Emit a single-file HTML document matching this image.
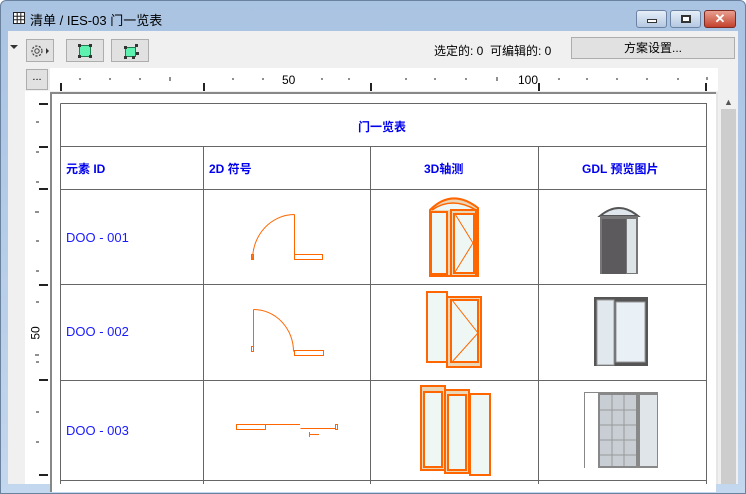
<!DOCTYPE html>
<html><head><meta charset="utf-8"><style>
*{margin:0;padding:0;box-sizing:border-box}
body{width:746px;height:484px;overflow:hidden;position:relative;background:#fff;font-family:"Liberation Sans","Noto Sans CJK SC",sans-serif;font-size:12px;color:#000}
.a{position:absolute}
.btn{position:absolute;border:1px solid #adadad;background:#e1e1e1}
.t{position:absolute;color:#1a1aff;font-size:13px;white-space:nowrap}
.b{font-weight:bold;color:#0000ee;font-size:12px}
</style></head><body>
<div class="a" style="left:0;top:0;width:746px;height:494px;background:linear-gradient(#a9c3e2,#c3d7ee);border-radius:6px 6px 0 0;border:1px solid #6b829f"></div>
<div class="a" style="left:8px;top:31px;width:730px;height:453px;background:#f0f0f0"></div>
<svg class="a" style="left:12px;top:11px" width="14" height="14"><rect x="1.5" y="1.5" width="11" height="11" fill="#fff" stroke="#222"/><path d="M5.2 1.5V12.5M8.8 1.5V12.5M1.5 5.2H12.5M1.5 8.8H12.5" stroke="#222"/></svg>
<div class="a" style="left:30px;top:10px;font-size:13px;color:#000">清单 / IES-03 门一览表</div>
<div class="a" style="left:636px;top:10px;width:31px;height:18px;border:1px solid #6d83a3;border-radius:3px;background:linear-gradient(#e6eef8,#b4c8e2)"><div class="a" style="left:10px;top:8px;width:10px;height:4px;border:1px solid #333;background:#fff"></div></div>
<div class="a" style="left:670px;top:10px;width:31px;height:18px;border:1px solid #6d83a3;border-radius:3px;background:linear-gradient(#e6eef8,#b4c8e2)"><div class="a" style="left:10px;top:4px;width:10px;height:8px;border:2px solid #333;background:#fff"></div></div>
<div class="a" style="left:704px;top:10px;width:32px;height:18px;border:1px solid #7e2a20;border-radius:3px;background:linear-gradient(#e8a091,#c3412c);color:#fff;font-weight:bold;text-align:center;line-height:16px;font-size:13px">✕</div>
<div class="a" style="left:10px;top:45px;width:0;height:0;border-left:4px solid transparent;border-right:4px solid transparent;border-top:4px solid #333"></div>
<div class="btn" style="left:26px;top:39px;width:28px;height:23px"><svg class="a" style="left:2px;top:3px" width="22" height="16"><circle cx="8" cy="8" r="5" fill="none" stroke="#444" stroke-width="1.2" stroke-dasharray="2.2 1.4"/><circle cx="8" cy="8" r="2.2" fill="none" stroke="#444"/><path d="M17 5L20 8L17 11Z" fill="#333"/></svg></div>
<div class="btn" style="left:66px;top:39px;width:38px;height:23px"><div class="a" style="left:12px;top:5px;width:12px;height:12px;background:#5ef2b0;border:1px solid #207a50"></div><div class="a" style="left:11px;top:4px;width:3px;height:3px;background:#333"></div><div class="a" style="left:22px;top:4px;width:3px;height:3px;background:#333"></div><div class="a" style="left:11px;top:15px;width:3px;height:3px;background:#333"></div><div class="a" style="left:22px;top:15px;width:3px;height:3px;background:#333"></div></div>
<div class="btn" style="left:111px;top:39px;width:38px;height:23px"><div class="a" style="left:13px;top:7px;width:11px;height:10px;background:#5ef2b0;border:1px solid #207a50"></div><div class="a" style="left:12px;top:6px;width:3px;height:3px;background:#333"></div><div class="a" style="left:23px;top:4px;width:3px;height:3px;background:#333"></div><div class="a" style="left:12px;top:16px;width:3px;height:3px;background:#333"></div><div class="a" style="left:20px;top:16px;width:3px;height:3px;background:#333"></div><div class="a" style="left:24px;top:12px;width:3px;height:3px;background:#333"></div></div>
<div class="a" style="left:434px;top:42px;font-size:12px">选定的: 0&nbsp; 可编辑的: 0</div>
<div class="btn" style="left:571px;top:37px;width:164px;height:22px;text-align:center;line-height:20px">方案设置...</div>
<div class="a" style="left:50px;top:68px;width:668px;height:23px;background:#fff"></div>
<div class="a" style="left:25px;top:91px;width:25px;height:393px;background:#fff"></div>
<div class="btn" style="left:26px;top:69px;width:22px;height:21px;text-align:center;line-height:14px;font-size:11px">...</div>
<svg class="a" style="left:0;top:0" width="746" height="484">
<g stroke="#222">
<path d="M61 83V91M204 83V91M371 83V91M539 83V91M706 83V91" stroke-width="2"/>
<path d="M80 78V80M110 78V80M140 78V80M170 77V81M233 78V80M263 78V80M322 78V80M349 78V80M406 78V80M435 78V80M466 78V80M497 77V81M559 78V80M587 78V80M617 78V80M647 78V80M678 78V80M707 77V80"/>
<path d="M39 104H48M39 147H48M39 189H48M39 285H48M39 380H48M39 475H48" stroke-width="2"/>
<path d="M36 122H39M36 152H39M36 182H39M35 212H39M36 241H39M36 271H39M36 302H39M35 355H39M36 362H39M36 412H39M36 442H39"/>
</g>
</svg>
<div class="a" style="left:282px;top:73px;font-size:12px">50</div>
<div class="a" style="left:518px;top:73px;font-size:12px">100</div>
<div class="a" style="left:29px;top:326px;font-size:12px;transform:rotate(-90deg)">50</div>
<div class="a" style="left:50px;top:92px;width:666px;height:400px;background:#fff;border-left:2px solid #888;border-top:2px solid #888"></div>
<div class="a" style="left:716px;top:92px;width:2px;height:392px;background:#e6e6e6"></div>
<div class="a" style="left:721px;top:93px;width:15px;height:391px;background:#f0f0f0"></div>
<div class="a" style="left:721px;top:109px;width:15px;height:375px;background:#cdcdcd"></div>
<div class="a" style="left:724px;top:97px;font-size:9px;color:#555">▲</div>
<svg class="a" style="left:0;top:0" width="746" height="484">
<g stroke="#666" fill="none" stroke-width="1">
<path d="M60.5 103.5H706.5V490M60.5 103.5V490M60.5 146.5H706.5M60.5 189.5H706.5M60.5 284.5H706.5M60.5 380.5H706.5M60.5 480.5H706.5M203.5 146.5V490M370.5 146.5V490M538.5 146.5V490"/>
</g>
<g stroke="#ff6600" fill="none" stroke-width="1">
<path d="M294.5 214.5V259.5M294.5 214.5A42 45 0 0 0 252.5 259.5"/>
<rect x="251.5" y="254.5" width="2" height="5"/><rect x="294.5" y="254.5" width="28" height="5"/>
<path d="M253.5 309.5V351.5M253.5 309.5A40 42 0 0 1 293.5 351.5"/>
<rect x="251.5" y="346.5" width="2" height="5"/><rect x="294.5" y="350.5" width="29" height="5"/>
<rect x="236.5" y="424.5" width="29" height="5"/><path d="M265.5 424.5H300M300.5 428.5H336"/><rect x="335.5" y="424.5" width="2" height="5"/><path d="M309 434.5H319M309.5 432V437"/>
</g>
<g stroke="#ff6600" stroke-width="2" fill="#eef7f3">
<path d="M430 210Q452 188 478 208V276H430Z" fill="#ead7b8"/>
<path d="M432 210Q452 196 476 210" fill="#eef7f3" stroke-width="1.5"/>
<rect x="431" y="212" width="16" height="62"/><rect x="451" y="210" width="25" height="66" fill="#ead7b8"/><rect x="454" y="214" width="20" height="59"/>
<path d="M455 214L473 243L455 272" fill="none" stroke-width="1"/>
<rect x="427" y="292" width="20" height="70"/><rect x="447" y="297" width="34" height="70" fill="#ead7b8"/><rect x="451" y="300" width="27" height="62"/>
<path d="M452 300L478 333L452 362" fill="none" stroke-width="1"/>
<rect x="421" y="386" width="24" height="84" fill="#ead7b8"/><rect x="424" y="392" width="18" height="75"/>
<rect x="445" y="390" width="24" height="83" fill="#ead7b8"/><rect x="448" y="395" width="18" height="75"/>
<rect x="470" y="394" width="20" height="81"/>
</g>
<g>
<path d="M600 216Q619 200 638 216Z" fill="#dfe7ec" stroke="#555" stroke-width="2"/>
<rect x="600" y="216" width="38" height="58" fill="#777"/><rect x="602" y="219" width="24" height="55" fill="#5d5a5e"/><rect x="627" y="219" width="9" height="54" fill="#dde4e8"/>
<rect x="594" y="297" width="54" height="69" fill="#555"/><rect x="597" y="300" width="17" height="65" fill="#e1e9ef" stroke="#999"/><rect x="616" y="302" width="29" height="60" fill="#e9f0f6" stroke="#999"/>
<rect x="584" y="392" width="74" height="76" fill="#888"/><rect x="585" y="393" width="13" height="75" fill="#fff"/><rect x="600" y="395" width="36" height="71" fill="#c8ced3"/><rect x="640" y="395" width="17" height="71" fill="#dfe5e8"/>
<path d="M600 410H636M600 425H636M600 440H636M600 455H636M612 395V466M624 395V466" stroke="#999"/>
</g>
</svg>
<div class="t b" style="left:358px;top:118px">门一览表</div>
<div class="t b" style="left:66px;top:160px">元素 ID</div>
<div class="t b" style="left:209px;top:160px">2D 符号</div>
<div class="t b" style="left:424px;top:160px">3D轴测</div>
<div class="t b" style="left:582px;top:160px">GDL 预览图片</div>
<div class="t" style="left:66px;top:230px">DOO - 001</div>
<div class="t" style="left:66px;top:324px">DOO - 002</div>
<div class="t" style="left:66px;top:423px">DOO - 003</div>
</body></html>
